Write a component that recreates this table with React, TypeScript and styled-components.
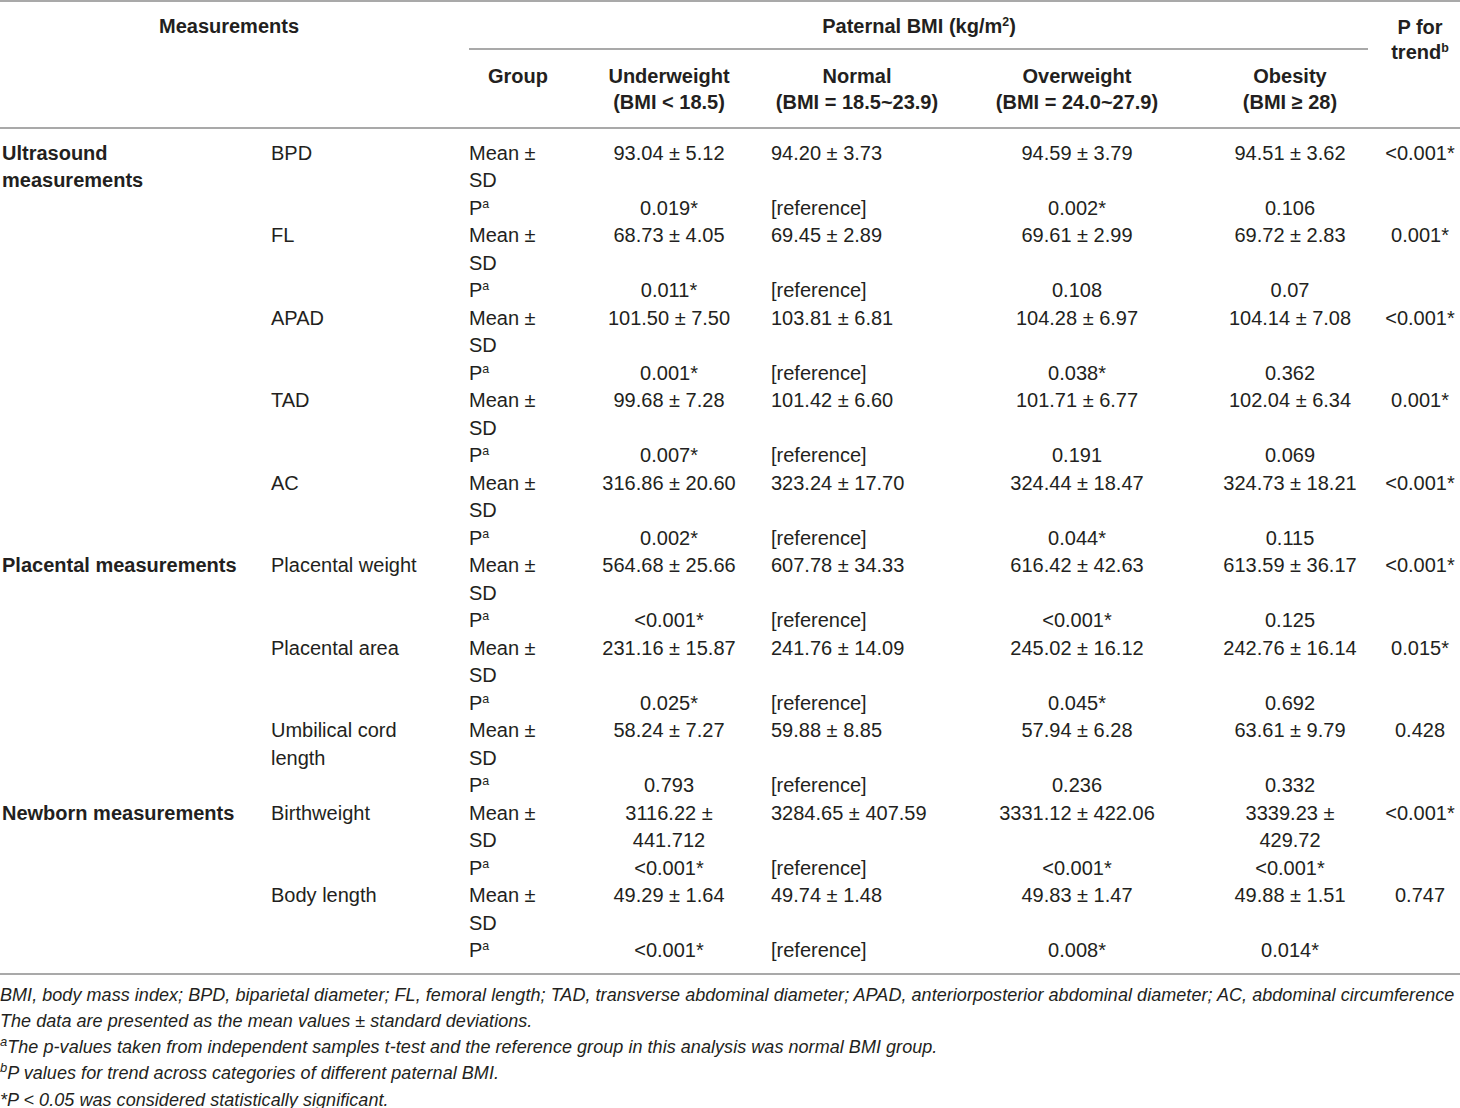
import React from "react";
import styled, { createGlobalStyle } from "styled-components";

const Global = createGlobalStyle`
  html, body { margin: 0; padding: 0; background: #fff; }
  body { font-family: "Liberation Sans", Arial, sans-serif; color: #231f20; }
`;

const RULE = "#a9a9a9";

const Page = styled.div`
  width: 1460px;
  padding: 0;
`;

const Table = styled.table`
  width: 1460px;
  table-layout: fixed;
  border-collapse: collapse;
  border-top: 2px solid ${RULE};
  border-bottom: 2px solid ${RULE};
  font-size: 20px;
`;

const HeadRow = styled.tr<{ $last?: boolean }>`
  border-bottom: ${(p) => (p.$last ? `2px solid ${RULE}` : "none")};
`;

const Th = styled.th<{ $pad?: string; $align?: string; $lh?: number }>`
  font-weight: 700;
  line-height: ${(p) => p.$lh ?? 26}px;
  vertical-align: top;
  text-align: ${(p) => p.$align || "center"};
  padding: ${(p) => p.$pad || "13px 11px 12px"};
  white-space: nowrap;
`;

const SpanHead = styled.th`
  font-weight: 700;
  line-height: 26px;
  vertical-align: top;
  text-align: center;
  padding: 11px 11px 11px 11px;
  white-space: nowrap;
  background-image: linear-gradient(${RULE}, ${RULE});
  background-repeat: no-repeat;
  background-size: calc(100% - 23px) 2px;
  background-position: 11px 100%;
`;

const Sup = styled.sup<{ $size?: number }>`
  font-size: ${(p) => p.$size ?? 0.62}em;
  line-height: 0;
  vertical-align: 0.55em;
`;

const Tr = styled.tr<{ $first?: boolean; $last?: boolean }>`
  & > td {
    padding-top: ${(p) => (p.$first ? "11px" : "0")};
    padding-bottom: ${(p) => (p.$last ? "8px" : "0")};
  }
`;

const Td = styled.td<{ $align?: string; $bold?: boolean; $pl?: number }>`
  line-height: 27.48px;
  vertical-align: top;
  text-align: ${(p) => p.$align || "center"};
  font-weight: ${(p) => (p.$bold ? 700 : 400)};
  padding-left: ${(p) => (p.$pl ?? 11)}px;
  padding-right: 11px;
  white-space: nowrap;
`;

const TrendTd = styled(Td)`
  padding-left: 0;
  padding-right: 0;
`;

const Notes = styled.div`
  padding-top: 7px;
  font-style: italic;
  font-size: 18px;
  line-height: 26.3px;
  letter-spacing: 0.05px;
  white-space: nowrap;
`;

const Note = styled.div``;

type Meas = {
  name: React.ReactNode;
  mean: React.ReactNode[];
  trend: string;
  p: string[];
};

type Group = { label: React.ReactNode; items: Meas[] };

const data: Group[] = [
  {
    label: (
      <>
        Ultrasound
        <br />
        measurements
      </>
    ),
    items: [
      { name: "BPD", mean: ["93.04 ± 5.12", "94.20 ± 3.73", "94.59 ± 3.79", "94.51 ± 3.62"], trend: "<0.001*", p: ["0.019*", "[reference]", "0.002*", "0.106"] },
      { name: "FL", mean: ["68.73 ± 4.05", "69.45 ± 2.89", "69.61 ± 2.99", "69.72 ± 2.83"], trend: "0.001*", p: ["0.011*", "[reference]", "0.108", "0.07"] },
      { name: "APAD", mean: ["101.50 ± 7.50", "103.81 ± 6.81", "104.28 ± 6.97", "104.14 ± 7.08"], trend: "<0.001*", p: ["0.001*", "[reference]", "0.038*", "0.362"] },
      { name: "TAD", mean: ["99.68 ± 7.28", "101.42 ± 6.60", "101.71 ± 6.77", "102.04 ± 6.34"], trend: "0.001*", p: ["0.007*", "[reference]", "0.191", "0.069"] },
      { name: "AC", mean: ["316.86 ± 20.60", "323.24 ± 17.70", "324.44 ± 18.47", "324.73 ± 18.21"], trend: "<0.001*", p: ["0.002*", "[reference]", "0.044*", "0.115"] },
    ],
  },
  {
    label: "Placental measurements",
    items: [
      { name: "Placental weight", mean: ["564.68 ± 25.66", "607.78 ± 34.33", "616.42 ± 42.63", "613.59 ± 36.17"], trend: "<0.001*", p: ["<0.001*", "[reference]", "<0.001*", "0.125"] },
      { name: "Placental area", mean: ["231.16 ± 15.87", "241.76 ± 14.09", "245.02 ± 16.12", "242.76 ± 16.14"], trend: "0.015*", p: ["0.025*", "[reference]", "0.045*", "0.692"] },
      {
        name: (
          <>
            Umbilical cord
            <br />
            length
          </>
        ),
        mean: ["58.24 ± 7.27", "59.88 ± 8.85", "57.94 ± 6.28", "63.61 ± 9.79"],
        trend: "0.428",
        p: ["0.793", "[reference]", "0.236", "0.332"],
      },
    ],
  },
  {
    label: "Newborn measurements",
    items: [
      {
        name: "Birthweight",
        mean: [
          <>
            3116.22 ±
            <br />
            441.712
          </>,
          "3284.65 ± 407.59",
          "3331.12 ± 422.06",
          <>
            3339.23 ±
            <br />
            429.72
          </>,
        ],
        trend: "<0.001*",
        p: ["<0.001*", "[reference]", "<0.001*", "<0.001*"],
      },
      { name: "Body length", mean: ["49.29 ± 1.64", "49.74 ± 1.48", "49.83 ± 1.47", "49.88 ± 1.51"], trend: "0.747", p: ["<0.001*", "[reference]", "0.008*", "0.014*"] },
    ],
  },
];

const colAlign = ["center", "left", "center", "center"];

export default function App() {
  const total = data.reduce((n, g) => n + g.items.length, 0);
  let idx = 0;
  return (
    <Page>
      <Global />
      <Table>
        <colgroup>
          <col style={{ width: 260 }} />
          <col style={{ width: 198 }} />
          <col style={{ width: 120 }} />
          <col style={{ width: 182 }} />
          <col style={{ width: 194 }} />
          <col style={{ width: 246 }} />
          <col style={{ width: 180 }} />
          <col style={{ width: 80 }} />
        </colgroup>
        <thead>
          <HeadRow>
            <Th colSpan={2} rowSpan={2} $pad="11px 11px 11px 11px">
              Measurements
            </Th>
            <SpanHead colSpan={5}>
              Paternal BMI (kg/m<Sup>2</Sup>)
            </SpanHead>
            <Th rowSpan={2} $pad="13px 0 0 0" $lh={25}>
              P for
              <br />
              trend<Sup>b</Sup>
            </Th>
          </HeadRow>
          <HeadRow $last>
            <Th>Group</Th>
            <Th>
              Underweight
              <br />
              (BMI &lt; 18.5)
            </Th>
            <Th>
              Normal
              <br />
              (BMI = 18.5~23.9)
            </Th>
            <Th>
              Overweight
              <br />
              (BMI = 24.0~27.9)
            </Th>
            <Th>
              Obesity
              <br />
              (BMI ≥ 28)
            </Th>
          </HeadRow>
        </thead>
        <tbody>
          {data.map((g) =>
            g.items.map((m, i) => {
              const first = idx === 0;
              const last = idx === total - 1;
              idx++;
              return (
                <React.Fragment key={String(idx)}>
                  <Tr $first={first}>
                    {i === 0 && (
                      <Td rowSpan={g.items.length * 2} $align="left" $bold $pl={2}>
                        {g.label}
                      </Td>
                    )}
                    <Td rowSpan={2} $align="left">
                      {m.name}
                    </Td>
                    <Td $align="left">
                      Mean ±
                      <br />
                      SD
                    </Td>
                    {m.mean.map((v, k) => (
                      <Td key={k} $align={colAlign[k]}>
                        {v}
                      </Td>
                    ))}
                    <TrendTd>{m.trend}</TrendTd>
                  </Tr>
                  <Tr $last={last}>
                    <Td $align="left">
                      P<Sup>a</Sup>
                    </Td>
                    {m.p.map((v, k) => (
                      <Td key={k} $align={colAlign[k]}>
                        {v}
                      </Td>
                    ))}
                    <TrendTd />
                  </Tr>
                </React.Fragment>
              );
            })
          )}
        </tbody>
      </Table>
      <Notes>
        <Note>
          BMI, body mass index; BPD, biparietal diameter; FL, femoral length; TAD, transverse abdominal diameter; APAD,
          anteriorposterior abdominal diameter; AC, abdominal circumference
        </Note>
        <Note>The data are presented as the mean values ± standard deviations.</Note>
        <Note>
          <Sup $size={0.72}>a</Sup>The p-values taken from independent samples t-test and the reference group in this
          analysis was normal BMI group.
        </Note>
        <Note>
          <Sup $size={0.72}>b</Sup>P values for trend across categories of different paternal BMI.
        </Note>
        <Note>*P &lt; 0.05 was considered statistically significant.</Note>
      </Notes>
    </Page>
  );
}
